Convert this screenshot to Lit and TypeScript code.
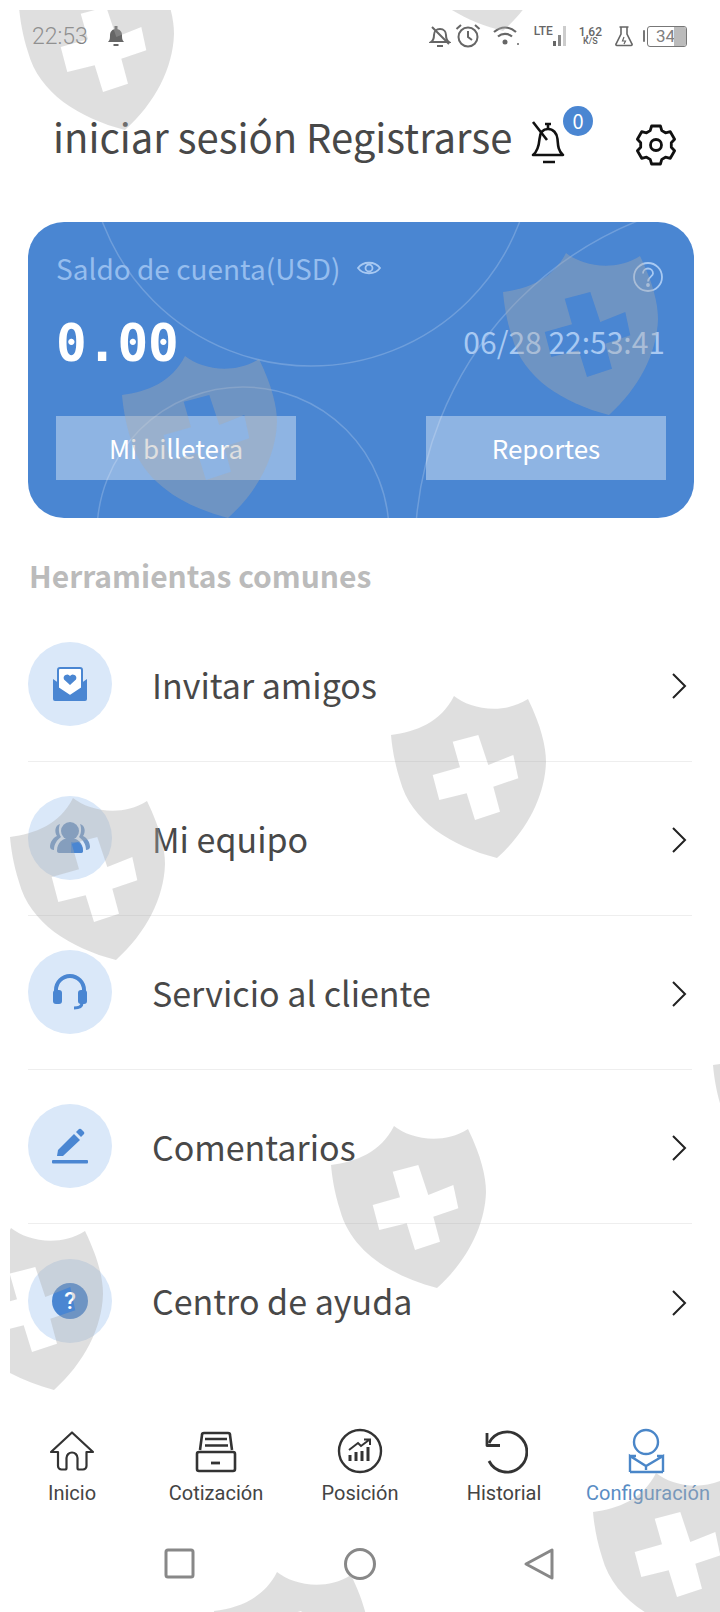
import { LitElement, html, svg, css } from "lit";
import { customElement } from "lit/decorators.js";

const SHIELDS: [number, number][] = [
  [19, -32], [397, -131], [503, 253], [122, 356], [391, 696], [10, 798],
  [331, 1126], [713, 1026], [-52, 1228], [593, 1473], [214, 1572],
];
const SHIELD_PATH =
  "M63 0C78 12 110 20 137 3C150 30 155 50 155 66C154 100 136 135 106 162C60 150 20 125 9 84C3 65 1 50 0 39C25 36 50 26 63 0Z" +
  "M61.7 45.7L87.3 39L97.3 69L122.3 59L127.3 82.3L102.3 90.7L109 115.7L84 124L75.7 97.3L48.3 104L41.7 79L69 71.3Z";

function gearPath(cx: number, cy: number): string {
  const pts: string[] = [];
  for (let k = 0; k < 6; k++) {
    const a = ((k * 60 - 90) * Math.PI) / 180;
    const spec: [number, number][] = [[-22, 15.5], [-13, 19.5], [13, 19.5], [22, 15.5]];
    for (const [d, r] of spec) {
      const t = a + (d * Math.PI) / 180;
      pts.push(`${(cx + r * Math.cos(t)).toFixed(1)} ${(cy + r * Math.sin(t)).toFixed(1)}`);
    }
  }
  return "M" + pts.join("L") + "Z";
}

const rows = [
  {
    label: "Invitar amigos",
    icon: html`<svg width="40" height="40" viewBox="0 0 40 40">
      <path d="M3 15V35a2 2 0 0 0 2 2H35a2 2 0 0 0 2-2V15L20 27Z" fill="#4a86d2"/>
      <path d="M8 24V6a2 2 0 0 1 2-2H30a2 2 0 0 1 2 2V24L20 32Z" fill="#fff" stroke="#4a86d2" stroke-width="2"/>
      <path d="M20 21l-6-5.500a3.500 3.500 0 0 1 6-3.500a3.500 3.500 0 0 1 6 3.500Z" fill="#4a86d2"/>
    </svg>`,
  },
  {
    label: "Mi equipo",
    icon: html`<svg width="44" height="40" viewBox="0 0 44 40">
      <path d="M12 6c-5 1-6 8-3 12c-4 2-7 6-7 11c0 2 2 3 4 3c0-6 3-10 7-13c-2-3-3-8-1-13Z" fill="#6f97c8"/>
      <path d="M32 6c5 1 6 8 3 12c4 2 7 6 7 11c0 2-2 3-4 3c0-6-3-10-7-13c2-3 3-8 1-13Z" fill="#6f97c8"/>
      <circle cx="22" cy="13" r="9" fill="#6f97c8"/>
      <path d="M9 33c0-9 6-13 13-13s13 4 13 13c0 1-1 2-2 2H11c-1 0-2-1-2-2Z" fill="#6f97c8"/>
      <path d="M23 35V24h7c3 2 5 5 5 9c0 1-1 2-2 2Z" fill="#4a86d2"/>
    </svg>`,
  },
  {
    label: "Servicio al cliente",
    icon: html`<svg width="40" height="40" viewBox="0 0 40 40">
      <path d="M6 22V18a14 14 0 0 1 28 0V22" fill="none" stroke="#4a86d2" stroke-width="4"/>
      <rect x="3" y="18" width="9" height="14" rx="3" fill="#4a86d2"/>
      <rect x="28" y="18" width="9" height="14" rx="3" fill="#4a86d2"/>
      <path d="M32 31c0 4-4 5-8 5" fill="none" stroke="#4a86d2" stroke-width="3"/>
    </svg>`,
  },
  {
    label: "Comentarios",
    icon: html`<svg width="40" height="40" viewBox="0 0 40 40">
      <path d="M7 30l1-6L24 8l6 6L13 30Z" fill="#4a86d2"/>
      <path d="M26 6l3-3a2 2 0 0 1 2 0l3 3a2 2 0 0 1 0 2l-3 3Z" fill="#4a86d2"/>
      <rect x="2" y="34" width="36" height="3.500" rx="1" fill="#4a86d2"/>
    </svg>`,
  },
  {
    label: "Centro de ayuda",
    icon: html`<svg width="40" height="40" viewBox="0 0 40 40">
      <circle cx="20" cy="20" r="18" fill="#4a86d2"/>
      <text x="20" y="28" text-anchor="middle" class="qm">?</text>
    </svg>`,
  },
];

const chevron = html`<svg class="chev" width="16" height="28" viewBox="0 0 16 28">
  <path d="M2 2L14 14L2 26" fill="none" stroke="#222" stroke-width="2"/>
</svg>`;

const tabs = [
  {
    label: "Inicio",
    icon: html`<svg width="48" height="48" viewBox="0 0 48 48" fill="none" stroke="#333" stroke-width="2.200" stroke-linejoin="round">
      <path d="M24 4.500L3 24H10V38a3.500 3.500 0 0 0 3.500 3.500H17a1.500 1.500 0 0 0 1.500-1.500V30a5.500 5.500 0 0 1 11 0V40a1.500 1.500 0 0 0 1.500 1.500H35a3.500 3.500 0 0 0 3.500-3.500V24H45Z"/>
    </svg>`,
  },
  {
    label: "Cotización",
    icon: html`<svg width="48" height="48" viewBox="0 0 48 48" fill="none" stroke="#333" stroke-width="2.600" stroke-linejoin="round">
      <path d="M8 22L10 7a2 2 0 0 1 2-2H36a2 2 0 0 1 2 2L40 22"/>
      <path d="M13 11H35M13 17.500H36"/>
      <rect x="5" y="24" width="38" height="19" rx="2"/>
      <path d="M19 35H28" stroke-width="2.800"/>
    </svg>`,
  },
  {
    label: "Posición",
    icon: html`<svg width="48" height="48" viewBox="0 0 48 48" fill="none" stroke="#333" stroke-width="2.400">
      <circle cx="24" cy="23" r="21"/>
      <path d="M14 33V27M20 33V24M26 33V23M32 33V19" stroke-width="3"/>
      <path d="M13 22L22 15L25 18L33 12M28 11.500H34V17" stroke-width="2"/>
    </svg>`,
  },
  {
    label: "Historial",
    icon: html`<svg width="48" height="48" viewBox="0 0 48 48" fill="none" stroke="#333" stroke-width="2.800">
      <path d="M9 15A20 20 0 1 1 9 33"/>
      <path d="M7 5V17.500H20" stroke-linejoin="round"/>
    </svg>`,
  },
  {
    label: "Configuración",
    active: true,
    icon: html`<svg width="48" height="48" viewBox="0 0 48 48" fill="none" stroke="#4a86c8" stroke-width="2.400">
      <circle cx="22" cy="14" r="12"/>
      <path d="M6 44V28L22 38L39 28V44M6 44H39M6 28H12M33 28H39M22 38V42"/>
    </svg>`,
  },
];

@customElement("app-root")
export class AppRoot extends LitElement {
  static styles = css`
    :host {
      display: block;
      position: relative;
      width: 720px;
      height: 1612px;
      overflow: hidden;
      background: #fff;
      font-family: "Noto Sans CJK SC", "Noto Sans", sans-serif;
      color: #333;
    }
    .page {
      display: flex;
      flex-direction: column;
      height: 100%;
    }
    .status {
      height: 72px;
      flex: none;
      display: flex;
      align-items: center;
      padding: 0 33px 0 32px;
      font-family: Roboto, sans-serif;
      color: #808080;
    }
    .time {
      font-size: 23px;
      font-weight: 300;
      width: 73px;
    }
    .status-right {
      margin-left: auto;
      display: flex;
      align-items: center;
      gap: 12px;
    }
    .s-bell {
      margin-right: -8px;
    }
    .s-alarm {
      margin-right: -1px;
    }
    .s-flask {
      margin-right: -3px;
    }
    .lte {
      font-size: 12px;
      font-weight: 500;
      color: #666;
      align-self: flex-start;
      line-height: 14px;
    }
    .net {
      display: flex;
      align-items: center;
    }
    .speed {
      display: flex;
      flex-direction: column;
      align-items: center;
      font-size: 12px;
      line-height: 10px;
      font-weight: 500;
      color: #666;
    }
    .speed small {
      font-size: 9px;
      line-height: 9px;
    }
    .battery {
      display: flex;
      align-items: center;
      gap: 2px;
    }
    .batt-tip {
      width: 2px;
      height: 12px;
      background: #777;
      border-radius: 1px;
    }
    .batt-body {
      position: relative;
      width: 38px;
      height: 19px;
      border: 1.500px solid #777;
      border-radius: 3px;
      font-size: 17px;
      line-height: 19px;
      text-indent: 8px;
      overflow: hidden;
    }
    .batt-fill {
      position: absolute;
      top: 0;
      right: 0;
      bottom: 0;
      width: 12px;
      background: #bbb;
    }
    .header {
      height: 150px;
      flex: none;
      display: flex;
      align-items: center;
      padding: 0 42px 8px 53px;
      box-sizing: border-box;
    }
    .auth {
      font-size: 40px;
      line-height: 56px;
      color: #484848;
      white-space: nowrap;
      width: 475px;
      margin-top: -14px;
    }
    .bell {
      position: relative;
      width: 46px;
      height: 48px;
    }
    .badge {
      position: absolute;
      left: 35px;
      top: -13px;
      width: 30px;
      height: 30px;
      border-radius: 50%;
      background: #4a86d2;
      color: #fff;
      font-size: 20px;
      line-height: 30px;
      text-align: center;
    }
    .gear {
      margin-left: auto;
      margin-top: 4px;
    }
    .card {
      position: relative;
      flex: none;
      height: 296px;
      margin: 0 26px 0 28px;
      box-sizing: border-box;
      padding: 22px 28px 38px;
      border-radius: 36px;
      background: #4a86d2;
      overflow: hidden;
      display: flex;
      flex-direction: column;
    }
    .rings {
      position: absolute;
      inset: 0;
    }
    .card-top,
    .card-mid,
    .card-btns {
      position: relative;
      display: flex;
      align-items: center;
    }
    .saldo {
      font-size: 28px;
      line-height: 44px;
      color: #95bdee;
    }
    .eye {
      margin-left: 17px;
    }
    .help {
      margin-left: auto;
      margin-top: 18px;
      margin-right: 3px;
    }
    .card-mid {
      justify-content: space-between;
      height: 64px;
      margin-top: 19px;
    }
    .amount {
      font-family: "DejaVu Sans Mono", monospace;
      font-weight: 700;
      font-size: 51px;
      color: #fff;
    }
    .date {
      font-size: 30px;
      color: #a8c9f2;
      margin-right: 1px;
      margin-top: -4px;
    }
    .card-btns {
      margin-top: auto;
      justify-content: space-between;
    }
    .btn {
      width: 240px;
      height: 64px;
      background: rgba(255, 255, 255, 0.38);
      color: #fff;
      font-size: 26px;
      line-height: 64px;
      text-align: center;
    }
    .section {
      font-size: 30px;
      font-weight: 700;
      line-height: 44px;
      color: #bbb;
      margin: 35px 0 0 29px;
      flex: none;
    }
    .list {
      margin: 11px 28px 0;
      flex: none;
    }
    .row {
      height: 154px;
      box-sizing: border-box;
      display: flex;
      align-items: center;
      border-bottom: 1px solid #eee;
      padding-bottom: 1px;
    }
    .row.last {
      border-bottom: none;
    }
    .circle {
      width: 84px;
      height: 84px;
      flex: none;
      border-radius: 50%;
      background: #dae8f9;
      display: flex;
      align-items: center;
      justify-content: center;
    }
    .row-label {
      margin-left: 40px;
      font-size: 34px;
      color: #484848;
    }
    .chev {
      margin-left: auto;
      margin-right: 5px;
      margin-top: 4px;
    }
    .qm {
      font-family: Roboto, sans-serif;
      font-size: 24px;
      font-weight: 500;
      fill: #fff;
    }
    .tabs {
      position: absolute;
      left: 0;
      right: 0;
      top: 1428px;
      display: grid;
      grid-template-columns: repeat(5, 144px);
      font-family: Roboto, sans-serif;
    }
    .tab {
      display: flex;
      flex-direction: column;
      align-items: center;
      font-size: 20px;
      line-height: 24px;
      color: #444;
      gap: 5px;
      white-space: nowrap;
    }
    .tab.active {
      color: #5a8dc4;
    }
    .nav {
      position: absolute;
      left: 0;
      right: 0;
      top: 1546px;
      display: grid;
      grid-template-columns: repeat(3, 180px);
      justify-content: center;
      justify-items: center;
    }
    .wm {
      position: absolute;
      left: 0;
      top: 0;
      pointer-events: none;
    }
  `;

  render() {
    return html`
      <div class="page">
        <div class="status">
          <span class="time">22:53</span>
          <svg width="22" height="24" viewBox="0 0 22 24">
            <path d="M3 18c2-2 2-4 2-7c0-3 2-6 6-6s6 3 6 6c0 3 0 5 2 7Z" fill="#666"/>
            <rect x="9.500" y="2" width="3" height="4" fill="#666"/>
            <rect x="8.500" y="20" width="5" height="2" fill="#666"/>
          </svg>
          <div class="status-right">
            <svg class="s-bell" width="22" height="24" viewBox="0 0 22 24" fill="none" stroke="#666" stroke-width="2">
              <path d="M2 18c3-2 3-4 3-7c0-3 2-6 6-6s6 3 6 6c0 3 0 5 3 7Z"/>
              <path d="M3 3L20 20M8 22H14"/>
            </svg>
            <svg class="s-alarm" width="26" height="26" viewBox="0 0 26 26" fill="none" stroke="#666" stroke-width="2">
              <circle cx="13" cy="14" r="9.500"/>
              <path d="M13 8V14L17 17M1.500 6L6 2M24.500 6L20 2"/>
            </svg>
            <svg width="30" height="24" viewBox="0 0 30 24" fill="none" stroke="#666" stroke-width="2.200">
              <path d="M2 8C9 2 17 2 24 8M6 12.500C10 9 16 9 20 12.500"/>
              <circle cx="13" cy="18" r="2.500" fill="#666" stroke="none"/>
              <circle cx="26" cy="20" r="1" fill="#666" stroke="none"/>
            </svg>
            <div class="net">
              <span class="lte">LTE</span>
              <svg width="14" height="24" viewBox="0 0 14 24">
                <rect x="0" y="17" width="3" height="5" fill="#666"/>
                <rect x="5" y="11" width="3" height="11" fill="#888"/>
                <rect x="10" y="2" width="3" height="20" fill="#ccc"/>
              </svg>
            </div>
            <div class="speed"><span>1,62</span><small>K/S</small></div>
            <svg class="s-flask" width="20" height="24" viewBox="0 0 20 24" fill="none" stroke="#666" stroke-width="1.600">
              <path d="M7 3V10L2 20a1 1 0 0 0 1 1.500H17a1 1 0 0 0 1-1.500L13 10V3M5.500 3H14.500"/>
              <path d="M10 13L8.500 17H11.500L10 20" stroke-width="1.200"/>
            </svg>
            <div class="battery">
              <span class="batt-tip"></span>
              <div class="batt-body"><span class="batt-fill"></span>34</div>
            </div>
          </div>
        </div>

        <div class="header">
          <div class="auth">iniciar sesión Registrarse</div>
          <div class="bell">
            <svg width="46" height="48" viewBox="0 0 46 48" fill="none" stroke="#111" stroke-width="2.600">
              <path d="M5 36C10 32 11 26 11.500 20C12 14 15 10 20 10C25 10 29 14 29.500 20C30 26 30 32 35 36Z" stroke-linejoin="round"/>
              <path d="M17 5H23M20 5V10M15 43H27M5 3L19 21"/>
            </svg>
            <span class="badge">0</span>
          </div>
          <svg class="gear" width="44" height="44" viewBox="0 0 44 44" fill="none" stroke="#111" stroke-width="2.800" stroke-linejoin="round">
            <path d="${gearPath(22, 22)}"/>
            <circle cx="22" cy="22" r="5.500"/>
          </svg>
        </div>

        <div class="card">
          <svg class="rings" width="666" height="296" viewBox="0 0 666 296" fill="none" stroke="rgba(255,255,255,.2)" stroke-width="1.500">
            <circle cx="283" cy="-79" r="223"/>
            <circle cx="215" cy="311" r="146"/>
            <circle cx="743" cy="329" r="356"/>
          </svg>
          <div class="card-top">
            <span class="saldo">Saldo de cuenta(USD)</span>
            <svg class="eye" width="24" height="20" viewBox="0 0 24 20" fill="none" stroke="#a8c9f2" stroke-width="1.800">
              <path d="M1 10C6 3 18 3 23 10C18 17 6 17 1 10Z"/>
              <circle cx="12" cy="10" r="3.500"/>
            </svg>
            <svg class="help" width="30" height="30" viewBox="0 0 30 30" fill="none" stroke="#a8c9f2" stroke-width="1.800">
              <circle cx="15" cy="15" r="14"/>
              <path d="M10 11.500a5 5 0 0 1 10 0c0 3-5 3.500-5 8"/>
              <circle cx="15" cy="23" r="1" fill="#a8c9f2"/>
            </svg>
          </div>
          <div class="card-mid">
            <span class="amount">0.00</span>
            <span class="date">06/28 22:53:41</span>
          </div>
          <div class="card-btns">
            <div class="btn">Mi billetera</div>
            <div class="btn">Reportes</div>
          </div>
        </div>

        <div class="section">Herramientas comunes</div>

        <div class="list">
          ${rows.map(
            (r, i) => html`<div class="row ${i === rows.length - 1 ? "last" : ""}">
              <div class="circle">${r.icon}</div>
              <span class="row-label">${r.label}</span>
              ${chevron}
            </div>`
          )}
        </div>
      </div>

      <div class="tabs">
        ${tabs.map(
          (t) => html`<div class="tab ${t.active ? "active" : ""}">${t.icon}<span>${t.label}</span></div>`
        )}
      </div>

      <div class="nav">
        <svg width="36" height="36" viewBox="0 0 36 36" fill="none" stroke="#888" stroke-width="3" stroke-linejoin="round">
          <rect x="4" y="4" width="27" height="27" rx="2"/>
        </svg>
        <svg width="36" height="36" viewBox="0 0 36 36" fill="none" stroke="#888" stroke-width="3">
          <circle cx="18" cy="18" r="14.500"/>
        </svg>
        <svg width="36" height="36" viewBox="0 0 36 36" fill="none" stroke="#888" stroke-width="3" stroke-linejoin="round">
          <path d="M30 4V32L4 18Z"/>
        </svg>
      </div>

      <svg class="wm" width="720" height="1612" viewBox="0 0 720 1612">
        <defs>
          <clipPath id="wmclip"><rect x="10" y="10" width="710" height="1602"/></clipPath>
        </defs>
        <g clip-path="url(#wmclip)" fill="rgb(170,170,170)" fill-opacity="0.38" fill-rule="evenodd">
          ${SHIELDS.map(
            ([x, y]) => svg`<path transform="translate(${x} ${y})" d="${SHIELD_PATH}"></path>`
          )}
        </g>
      </svg>
    `;
  }
}
